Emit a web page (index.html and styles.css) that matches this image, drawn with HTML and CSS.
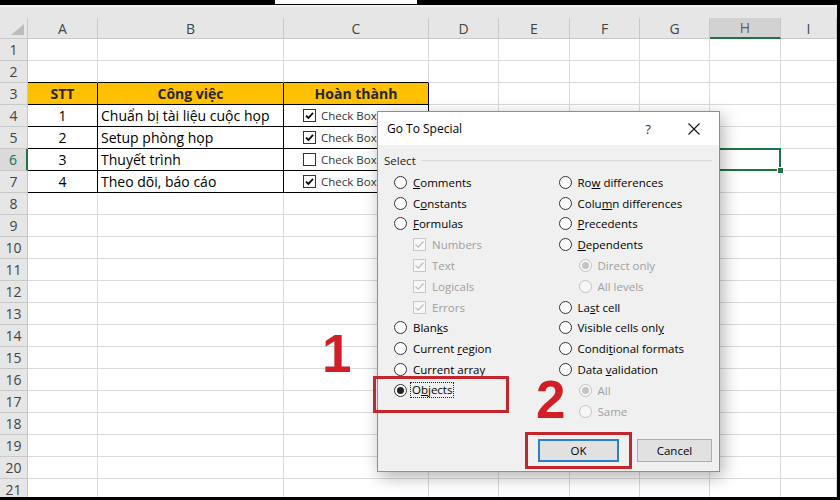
FILE: index.html
```html
<!DOCTYPE html>
<html lang="vi">
<head>
    <meta charset="UTF-8">
    <meta name="viewport" content="width=device-width, initial-scale=1.0">
    <title>Go To Special - Objects</title>
    <link rel="stylesheet" href="styles.css">
</head>
<body>
    <div class="topstrip"><div class="formula-edge"></div></div>

    <div class="screen">
        <div class="ribbon-edge"></div>
        <div class="sheet" id="sheet"></div>

        <!-- Go To Special dialog -->
        <div class="dialog">
            <div class="titlebar">
                <span class="title">Go To Special</span>
                <span class="tb-btn">?</span>
                <span class="tb-btn">
                    <svg width="12" height="12" viewBox="0 0 12 12"><path d="M0.5 0.5 11.5 11.5 M11.5 0.5 0.5 11.5" stroke="#111" stroke-width="1.1" fill="none"/></svg>
                </span>
            </div>
            <div class="dialog-body">
                <div class="group-label"><span>Select</span><span class="group-line"></span></div>
                <div class="options">
                    <!-- left column -->
                    <label class="opt"><span class="radio"></span><span><u>C</u>omments</span></label>
                    <label class="opt"><span class="radio"></span><span>C<u>o</u>nstants</span></label>
                    <label class="opt"><span class="radio"></span><span><u>F</u>ormulas</span></label>
                    <label class="opt sub off"><span class="box"><svg width="11" height="11" viewBox="0 0 11 11"><path d="M1.5 5.5 4.2 8.2 9.5 2.5" fill="none" stroke="#bdbdbd" stroke-width="1.2"/></svg></span><span>Numbers</span></label>
                    <label class="opt sub off"><span class="box"><svg width="11" height="11" viewBox="0 0 11 11"><path d="M1.5 5.5 4.2 8.2 9.5 2.5" fill="none" stroke="#bdbdbd" stroke-width="1.2"/></svg></span><span>Text</span></label>
                    <label class="opt sub off"><span class="box"><svg width="11" height="11" viewBox="0 0 11 11"><path d="M1.5 5.5 4.2 8.2 9.5 2.5" fill="none" stroke="#bdbdbd" stroke-width="1.2"/></svg></span><span>Logicals</span></label>
                    <label class="opt sub off"><span class="box"><svg width="11" height="11" viewBox="0 0 11 11"><path d="M1.5 5.5 4.2 8.2 9.5 2.5" fill="none" stroke="#bdbdbd" stroke-width="1.2"/></svg></span><span>Errors</span></label>
                    <label class="opt"><span class="radio"></span><span>Blan<u>k</u>s</span></label>
                    <label class="opt"><span class="radio"></span><span>Current <u>r</u>egion</span></label>
                    <label class="opt"><span class="radio"></span><span>Current array</span></label>
                    <label class="opt"><span class="radio on"></span><span class="focus">O<u>b</u>jects</span></label>
                    <span></span>

                    <!-- right column -->
                    <label class="opt"><span class="radio"></span><span>Ro<u>w</u> differences</span></label>
                    <label class="opt"><span class="radio"></span><span>Colu<u>m</u>n differences</span></label>
                    <label class="opt"><span class="radio"></span><span><u>P</u>recedents</span></label>
                    <label class="opt"><span class="radio"></span><span><u>D</u>ependents</span></label>
                    <label class="opt sub off"><span class="radio on"></span><span>Direct only</span></label>
                    <label class="opt sub off"><span class="radio"></span><span>All levels</span></label>
                    <label class="opt"><span class="radio"></span><span>La<u>s</u>t cell</span></label>
                    <label class="opt"><span class="radio"></span><span>Visible cells onl<u>y</u></span></label>
                    <label class="opt"><span class="radio"></span><span>Condi<u>t</u>ional formats</span></label>
                    <label class="opt"><span class="radio"></span><span>Data <u>v</u>alidation</span></label>
                    <label class="opt sub off"><span class="radio on"></span><span>All</span></label>
                    <label class="opt sub off"><span class="radio"></span><span>Same</span></label>
                </div>
                <div class="buttons">
                    <button class="btn default">OK</button>
                    <button class="btn cancel">Cancel</button>
                </div>
            </div>
        </div>

        <!-- tutorial markers -->
        <div class="mark-box box-objects"></div>
        <div class="mark-box box-ok"></div>
        <div class="mark-num num-1">1</div>
        <div class="mark-num num-2">2</div>
    </div>

    <script>
        const cols = ['', 'A', 'B', 'C', 'D', 'E', 'F', 'G', 'H', 'I'];
        const data = {
            3: ['STT', 'Công việc', 'Hoàn thành'],
            4: ['1', 'Chuẩn bị tài liệu cuộc họp', true],
            5: ['2', 'Setup phòng họp', true],
            6: ['3', 'Thuyết trình', false],
            7: ['4', 'Theo dõi, báo cáo', true]
        };
        const tick = '<svg width="11" height="11" viewBox="0 0 11 11"><path d="M2 5.6 4.4 8 9 2.8" fill="none" stroke="#000" stroke-width="1.8"/></svg>';
        const sheet = document.getElementById('sheet');

        function addCell(cls, html) {
            const div = document.createElement('div');
            div.className = 'cell ' + cls;
            if (html) div.innerHTML = html;
            sheet.appendChild(div);
        }

        // column headers
        cols.forEach((c, i) => {
            if (i === 0) addCell('hdr corner', '<span class="tri"></span>');
            else addCell('hdr' + (c === 'H' ? ' on' : ''), c);
        });

        // rows 1..21
        for (let r = 1; r <= 21; r++) {
            addCell('rownum' + (r === 6 ? ' on' : ''), String(r));
            for (let c = 1; c <= 9; c++) {
                const row = data[r];
                let cls = '';
                let html = '';
                if (c <= 3 && r >= 3 && r <= 7) cls += ' tbl';
                if (c <= 3 && r === 2) cls += ' tbl-top';
                if (row && c <= 3) {
                    const v = row[c - 1];
                    if (r === 3) { cls += ' yellow'; html = v; }
                    else if (c === 1) { cls += ' center'; html = v; }
                    else if (c === 2) { html = v; }
                    else {
                        cls += ' ctrl';
                        html = `<span class="cb">${v ? tick : ''}</span><span class="cb-label">Check Box</span>`;
                    }
                }
                if (r === 6 && c === 8) cls += ' active';
                addCell(cls, html);
            }
        }
    </script>
</body>
</html>
```

FILE: styles.css
```css
body {
    margin: 0;
    background: #000;
    font-family: "Open Sans", "Noto Sans", sans-serif;
}
.topstrip {
    height: 5px;
    display: flex;
}
.formula-edge {
    margin-left: 275px;
    width: 142px;
    height: 4px;
    background: #fff;
}
.screen {
    position: relative;
    width: 837px;
    height: 492px;
    overflow: hidden;
    background: #fff;
}
.ribbon-edge {
    height: 13px;
    box-sizing: border-box;
    background: #e6e6e6;
    border-top: 2px solid #f1f1f1;
}

/* worksheet grid */
.sheet {
    display: grid;
    grid-template-columns: 28px 70px 186px 145px 70px 71px 70px 70px 71px 56px;
    grid-template-rows: 21px;
    grid-auto-rows: 22px;
    font-size: 14px;
    color: #000;
}
.cell {
    box-sizing: border-box;
    border-right: 1px solid #dadada;
    border-bottom: 1px solid #dadada;
    display: flex;
    align-items: center;
    padding: 0 3px;
    white-space: nowrap;
    overflow: hidden;
}
.hdr, .rownum {
    background: #e6e6e6;
    color: #444;
    justify-content: center;
    padding: 0;
    border-right-color: #c8c8c8;
    border-bottom-color: #c8c8c8;
}
.hdr.on {
    background: #d2d2d2;
    color: #5e5e5e;
    border-bottom: 2px solid #217346;
}
.rownum.on {
    background: #dadada;
    color: #217346;
    border-right: 2px solid #217346;
}
.corner {
    justify-content: flex-end;
    align-items: flex-end;
    padding: 0 3px 3px 0;
}
.tri {
    width: 0;
    height: 0;
    border-left: 13px solid transparent;
    border-bottom: 11px solid #bcbcbc;
}
.tbl {
    border-right-color: #000;
    border-bottom-color: #000;
}
.tbl-top {
    border-bottom-color: #000;
}
.yellow {
    background: #ffc000;
    color: #262626;
    font-weight: 700;
    justify-content: center;
}
.center {
    justify-content: center;
}
.ctrl {
    padding-left: 19px;
}
.cb {
    width: 13px;
    height: 13px;
    box-sizing: border-box;
    border: 1px solid #333;
    background: #fff;
    margin-right: 5px;
    flex-shrink: 0;
    display: flex;
    align-items: center;
    justify-content: center;
}
.cb-label {
    font-size: 11.5px;
    color: #333;
}
.active {
    position: relative;
    overflow: visible;
    z-index: 1;
}
.active::before {
    content: '';
    position: absolute;
    top: -1px;
    left: -1px;
    right: -1px;
    bottom: -1px;
    border: 2px solid #217346;
}
.active::after {
    content: '';
    position: absolute;
    right: -4px;
    bottom: -4px;
    width: 5px;
    height: 5px;
    background: #217346;
    border: 1px solid #fff;
}

/* dialog */
.dialog {
    position: absolute;
    left: 377px;
    top: 106px;
    width: 343px;
    height: 361px;
    box-sizing: border-box;
    border: 1px solid #8e8e8e;
    background: #f0f0f0;
    box-shadow: 3px 5px 16px rgba(0,0,0,0.3);
    display: flex;
    flex-direction: column;
    z-index: 2;
}
.titlebar {
    height: 33px;
    background: #fff;
    display: flex;
    align-items: center;
    padding-left: 9px;
    padding-right: 2px;
}
.title {
    flex: 1;
    font-size: 12px;
    color: #000;
}
.tb-btn {
    width: 46px;
    height: 33px;
    display: flex;
    align-items: center;
    justify-content: center;
    font-size: 13px;
    color: #333;
}
.dialog-body {
    flex: 1;
    display: flex;
    flex-direction: column;
    padding: 7px 7px 9px 6px;
    font-size: 11.5px;
    color: #000;
}
.group-label {
    height: 16px;
    display: flex;
    align-items: center;
    gap: 5px;
    color: #222;
}
.group-line {
    flex: 1;
    border-top: 1px solid #d9d9d9;
}
.options {
    margin: 4px 0 0 10px;
    display: grid;
    grid-template-columns: 164.5px 1fr;
    grid-template-rows: repeat(12, 20.8px);
    grid-auto-flow: column;
}
.opt {
    display: flex;
    align-items: center;
}
.opt.sub {
    padding-left: 20px;
}
.opt.off {
    color: #a0a0a0;
}
.radio {
    width: 13px;
    height: 13px;
    box-sizing: border-box;
    border: 1px solid #333;
    border-radius: 50%;
    background: #fff;
    margin-right: 6px;
    display: flex;
    align-items: center;
    justify-content: center;
    flex-shrink: 0;
}
.radio.on::after {
    content: '';
    width: 7px;
    height: 7px;
    border-radius: 50%;
    background: #222;
}
.off .radio {
    border-color: #c2c2c2;
    background: #f7f7f7;
}
.off .radio.on::after {
    background: #c4c4c4;
}
.box {
    width: 13px;
    height: 13px;
    box-sizing: border-box;
    border: 1px solid #c8c8c8;
    background: #f7f7f7;
    margin-right: 6px;
    display: flex;
    align-items: center;
    justify-content: center;
    flex-shrink: 0;
}
.opt.sub .box {
    margin-left: -1px;
}
.focus {
    margin-left: -3px;
    padding: 0 1px;
    border: 1px dotted #222;
    line-height: 14px;
}
.buttons {
    margin-top: auto;
    display: flex;
    justify-content: flex-end;
    gap: 18px;
}
.btn {
    height: 23px;
    box-sizing: border-box;
    font-family: "Open Sans", "Noto Sans", sans-serif;
    font-size: 11.5px;
    color: #000;
    background: #e1e1e1;
    border: 1px solid #adadad;
    padding: 0;
}
.btn.default {
    width: 81px;
    border: 2px solid #2b7fcf;
}
.btn.cancel {
    width: 75px;
}

/* red tutorial markers */
.mark-box {
    position: absolute;
    box-sizing: border-box;
    border: 3px solid #c3262d;
    z-index: 3;
}
.box-objects {
    left: 373px;
    top: 371px;
    width: 136px;
    height: 37px;
}
.box-ok {
    left: 525px;
    top: 427px;
    width: 107px;
    height: 37px;
}
.mark-num {
    position: absolute;
    font-family: "Liberation Sans", Arial, sans-serif;
    font-weight: 700;
    font-size: 53px;
    line-height: 53px;
    color: #d21f27;
    z-index: 3;
}
.num-1 {
    left: 322px;
    top: 322px;
}
.num-2 {
    left: 536px;
    top: 368px;
}
```
